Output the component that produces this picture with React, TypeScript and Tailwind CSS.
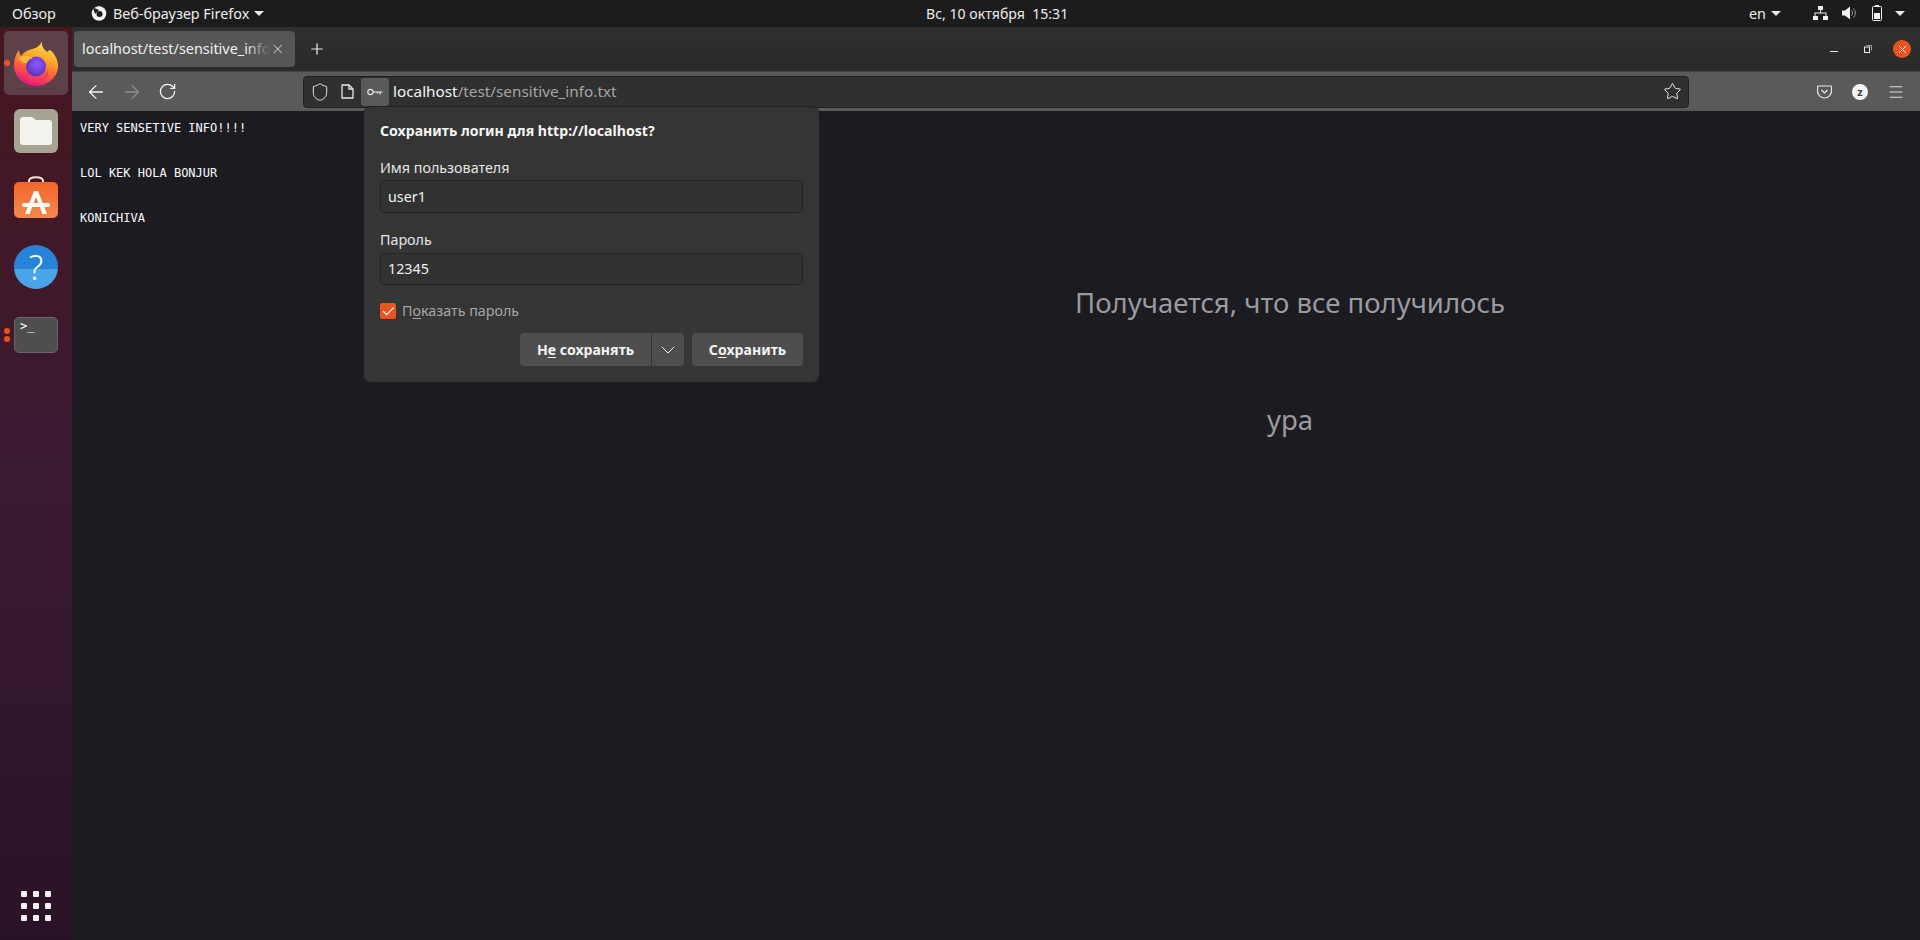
import React from "react";
import { ChevronDown, Shield, Star, Menu, ArrowLeft, ArrowRight, RotateCw, X, Plus, Check } from "lucide-react";

const ui = { fontFamily: '"Noto Sans", sans-serif' };

function FirefoxLogo() {
  return (
    <svg width="44" height="45" viewBox="0 0 44 45">
      <defs>
        <linearGradient id="ffBody" x1="0.75" y1="0" x2="0.4" y2="1">
          <stop offset="0" stopColor="#ffe14d" />
          <stop offset="0.4" stopColor="#ffa52a" />
          <stop offset="0.68" stopColor="#ff5a3c" />
          <stop offset="1" stopColor="#e31587" />
        </linearGradient>
        <radialGradient id="ffBall" cx="0.55" cy="0.4" r="0.6">
          <stop offset="0" stopColor="#9059ff" />
          <stop offset="1" stopColor="#5a32c0" />
        </radialGradient>
      </defs>
      <path d="M28 0C27 5 30 8 33 11c1-1 2-2 3-2 5 4 8 10 8 16 0 11-10 20-22 20C10 45 0 36 0 24c0-6 2-11 5-15 0 3 1 5 2 6 2-3 5-5 8-6 5-1 11-3 13-9z" fill="url(#ffBody)" />
      <circle cx="22" cy="25.500" r="10" fill="url(#ffBall)" />
      <path d="M5 17c4-3 10-3 14 0-3 1-5 2-6 5-3 1-7-1-8-5z" fill="#ffb83b" />
      <path d="M12 32c2 4 6 6 10 6 6 0 11-4 12-10 1 8-5 14-12 14-5 0-9-4-10-10z" fill="#f5366a" opacity="0.75" />
    </svg>
  );
}

function DockItem({ children, active, dots = 0 }: { children: React.ReactNode; active?: boolean; dots?: number }) {
  return (
    <div className={`relative flex h-[64px] w-[64px] items-center justify-center rounded-[5px] ${active ? "bg-[#5e4148]" : ""}`}>
      {children}
      {dots > 0 && (
        <div className="absolute left-0 top-1/2 flex -translate-y-1/2 flex-col gap-[2px]">
          {Array.from({ length: dots }).map((_, i) => (
            <span key={i} className="h-[6px] w-[6px] rounded-full bg-[#e95420]" />
          ))}
        </div>
      )}
    </div>
  );
}

function Dock() {
  return (
    <aside className="flex w-[72px] shrink-0 flex-col items-center bg-gradient-to-b from-[#46161f] via-[#3a1a33] to-[#2a1226] pt-[4px]">
      <div className="flex flex-col gap-[4px]">
        <DockItem active dots={1}>
          <FirefoxLogo />
        </DockItem>
        <DockItem>
          <div className="flex h-[44px] w-[44px] items-center justify-center rounded-[6px] bg-[#a8a493]">
            <svg width="32" height="28" viewBox="0 0 32 28">
              <path d="M3 0h9l4 3h13a3 3 0 0 1 3 3v19a3 3 0 0 1-3 3H3a3 3 0 0 1-3-3V3a3 3 0 0 1 3-3z" fill="#f5f3ef" />
            </svg>
          </div>
        </DockItem>
        <DockItem>
          <svg width="44" height="46" viewBox="0 0 44 46">
            <defs>
              <linearGradient id="bag" x1="0" y1="0" x2="0" y2="1">
                <stop offset="0" stopColor="#f4652a" />
                <stop offset="1" stopColor="#f28a50" />
              </linearGradient>
            </defs>
            <path d="M15 9V5c0-5 14-5 14 0v4" fill="none" stroke="#fbe6d4" strokeWidth="2" />
            <rect y="6" width="44" height="36" rx="5" fill="url(#bag)" />
            <path d="M20 15h4l9 23h-4.500L22 21l-6.500 17H11z" fill="#fff" />
            <rect x="8" y="27" width="28" height="4" rx="2" fill="#fff" />
          </svg>
        </DockItem>
        <DockItem>
          <div className="flex h-[44px] w-[44px] items-center justify-center rounded-full bg-[linear-gradient(#2783d8_55%,#49a5e8_55%)]">
            <span className="text-[34px] font-light leading-[44px] text-white" style={ui}>?</span>
          </div>
        </DockItem>
        <DockItem dots={2}>
          <div className="h-[36px] w-[44px] rounded-[5px] border border-[#666] bg-[#4e4e4e] pl-[5px] pt-[1px]">
            <span className="block text-[12px] leading-[14px] text-white" style={{ fontFamily: '"DejaVu Sans Mono", monospace' }}>&gt;_</span>
          </div>
        </DockItem>
      </div>
      <div className="mt-auto mb-[19px] grid grid-cols-3 gap-[6px]">
        {Array.from({ length: 9 }).map((_, i) => (
          <span key={i} className="h-[6px] w-[6px] rounded-[1px] bg-[#eeeeee]" />
        ))}
      </div>
    </aside>
  );
}

function Caret({ className = "" }: { className?: string }) {
  return <span className={`h-0 w-0 border-x-[5px] border-t-[5px] border-x-transparent border-t-[#e8e8e8] ${className}`} />;
}

function TopBar() {
  return (
    <header className="flex h-[27px] shrink-0 items-center bg-[#1c1c1c] text-[14.400px] text-[#ececec]" style={ui}>
      <div className="flex w-[926px] items-center">
        <span className="ml-[12px]">Обзор</span>
        <svg className="ml-[35px]" width="16" height="16" viewBox="0 0 16 16">
          <circle cx="8" cy="8.500" r="7.300" fill="#f2f2f2" />
          <circle cx="8.500" cy="9" r="3" fill="#1c1c1c" />
          <path d="M2 2.500l6 2.500-4 4z" fill="#1c1c1c" />
          <path d="M8 0.500l2 3.500-3 0z" fill="#f2f2f2" />
        </svg>
        <span className="ml-[6px]">Веб-браузер Firefox</span>
        <Caret className="ml-[5px]" />
      </div>
      <span className="text-[14.100px]">Вс, 10 октября&nbsp;&nbsp;15:31</span>
      <div className="ml-auto flex items-center">
        <span>en</span>
        <Caret className="ml-[5px]" />
        <svg className="ml-[32px]" width="15" height="14" viewBox="0 0 15 14" fill="#f0f0f0">
          <rect x="5" y="0" width="5" height="4" />
          <rect x="0" y="10" width="5" height="4" />
          <rect x="10" y="10" width="5" height="4" />
          <path d="M7 4h1v2.500h5.500V10h-1V7.500h-10V10h-1V6.500H7z" />
        </svg>
        <svg className="ml-[14px]" width="14" height="14" viewBox="0 0 14 14">
          <path d="M0 4.500h3L8 0.500v13l-5-4H0z" fill="#f0f0f0" />
          <path d="M9.500 4.500a3.500 3.500 0 0 1 0 5M11.500 2.500a6.500 6.500 0 0 1 0 9" stroke="#9a9a9a" strokeWidth="1" fill="none" />
        </svg>
        <svg className="ml-[16px]" width="10" height="16" viewBox="0 0 10 16">
          <rect x="3" y="0" width="4" height="2" fill="#f0f0f0" />
          <rect x="0.500" y="1.500" width="9" height="14" rx="1" fill="none" stroke="#f0f0f0" />
          <rect x="2" y="8" width="6" height="6" fill="#f0f0f0" />
        </svg>
        <Caret className="ml-[13px] mr-[15px]" />
      </div>
    </header>
  );
}

function TabBar() {
  return (
    <div className="flex h-[44px] shrink-0 items-center bg-gradient-to-b from-[#2f2f2f] to-[#2a2a2a] pl-[2px]" style={ui}>
      <div className="flex h-[36px] w-[221px] items-center rounded-[4px] bg-[#565656] pl-[8px] pr-[9px]">
        <span className="relative flex-1 whitespace-nowrap text-[14.400px] text-[#f0f0f0]">
          localhost/test/sensitive_info
          <span className="absolute inset-y-0 right-0 w-[24px] bg-gradient-to-r from-transparent to-[#565656]" />
        </span>
        <X size={16} strokeWidth={1.300} className="text-[#ececec]" />
      </div>
      <Plus size={18} strokeWidth={1.600} className="ml-[13px] text-[#f0f0f0]" />
      <div className="ml-auto flex items-center">
        <span className="mt-[4px] h-[1px] w-[8px] bg-[#e8e8e8]" />
        <svg className="ml-[26px]" width="8" height="8" viewBox="0 0 8 8" fill="none" stroke="#e8e8e8">
          <rect x="0.500" y="2" width="5" height="5.500" />
          <path d="M2.500 0.500h5v5" stroke="#a0a0a0" />
        </svg>
        <div className="ml-[21px] mr-[9px] flex h-[18px] w-[18px] items-center justify-center rounded-full bg-[#e95420]">
          <X size={13} strokeWidth={1.800} className="text-white" />
        </div>
      </div>
    </div>
  );
}

function UrlBar() {
  return (
    <div className="flex h-[40px] shrink-0 items-center border-t border-[#444] bg-[#5a5a5a]" style={ui}>
      <ArrowLeft size={22} strokeWidth={1.400} className="ml-[13px] text-[#f4f4f4]" />
      <ArrowRight size={22} strokeWidth={1.400} className="ml-[14px] text-[#8f8f8f]" />
      <RotateCw size={19} strokeWidth={1.600} className="ml-[15px] text-[#f4f4f4]" />
      <div className="ml-[126px] flex h-[32px] w-[1386px] items-center rounded-[4px] border border-[#1f1f1f] bg-[#303030] pl-[6px]">
        <Shield size={20} strokeWidth={1.200} className="text-[#e8e8e8]" />
        <svg className="ml-[11px]" width="13" height="15" viewBox="0 0 13 15" fill="none" stroke="#e8e8e8" strokeWidth="1.300">
          <path d="M1 1h7l4 4v9H1z" strokeLinejoin="round" />
          <path d="M8 1v4h4" />
        </svg>
        <div className="ml-[7px] flex h-[28px] w-[28px] items-center justify-center rounded-[3px] bg-[#5a5a5a]">
          <svg width="16" height="8" viewBox="0 0 16 8" fill="none" stroke="#ececec" strokeWidth="1.200">
            <circle cx="3.500" cy="4" r="2.700" />
            <path d="M6 4h9.500M13 4v2.500M10.500 4v1.500" />
          </svg>
        </div>
        <span className="ml-[4px] flex-1 whitespace-nowrap text-[15.300px]">
          <span className="text-[#f4f4f4]">localhost</span>
          <span className="text-[#a6a6a6]">/test/sensitive_info.txt</span>
        </span>
        <Star size={19} strokeWidth={1.250} className="mr-[6px] text-[#e8e8e8]" />
      </div>
      <div className="ml-auto flex items-center pr-[15px]">
        <svg width="15" height="14" viewBox="0 0 15 14" fill="none" stroke="#e8e8e8" strokeWidth="1.200">
          <path d="M1.500 1h12a1 1 0 0 1 1 1v4a7 7 0 0 1-14 0V2a1 1 0 0 1 1-1z" />
          <path d="M4.500 5l3 3 3-3" />
        </svg>
        <div className="ml-[20px] flex h-[16px] w-[16px] items-center justify-center rounded-full bg-[#f4f4f4] text-[11px] font-bold leading-none text-[#444]">z</div>
        <Menu size={18} strokeWidth={1.200} className="ml-[19px] text-[#f0f0f0]" />
      </div>
    </div>
  );
}

function LoginPopup() {
  return (
    <div className="absolute left-[291px] top-[79px] z-10 h-[277px] w-[457px] rounded-[8px] border border-[#1f1f1f] bg-[#353535] px-[16px] pt-[14px] text-[14.300px] text-[#e6e6e6]" style={ui}>
      <div className="text-[14.100px] font-bold leading-[19px] text-[#f6f6f6]">Сохранить логин для http://localhost?</div>
      <div className="mt-[18px] leading-[19px]">Имя пользователя</div>
      <div className="mt-[3px] flex h-[33px] items-center rounded-[4px] border border-[#232323] bg-[#323232] px-[7px] text-[#f0f0f0]">user1</div>
      <div className="mt-[17px] leading-[19px]">Пароль</div>
      <div className="mt-[4px] flex h-[32px] items-center rounded-[4px] border border-[#232323] bg-[#323232] px-[7px] text-[#f0f0f0]">12345</div>
      <div className="mt-[18px] flex h-[16px] items-center">
        <div className="flex h-[16px] w-[16px] items-center justify-center rounded-[2px] bg-[#e95420]">
          <Check size={15} strokeWidth={1.800} className="text-white" />
        </div>
        <span className="ml-[6px] text-[#a6a6a6]">
          П<span className="underline underline-offset-2">о</span>казать пароль
        </span>
      </div>
      <div className="mt-[14px] flex justify-end text-[14.100px] font-bold text-[#f4f4f4]">
        <button className="h-[33px] w-[132px] rounded-l-[4px] border-r border-[#353535] bg-[#4e4e4e]">
          Н<span className="underline underline-offset-2">е</span> сохранять
        </button>
        <button className="flex h-[33px] w-[32px] items-center justify-center rounded-r-[4px] bg-[#4e4e4e]">
          <ChevronDown size={24} strokeWidth={1} />
        </button>
        <button className="ml-[8px] h-[33px] w-[111px] rounded-[4px] bg-[#4e4e4e]">
          С<span className="underline underline-offset-2">о</span>хранить
        </button>
      </div>
    </div>
  );
}

function Page() {
  return (
    <main className="flex flex-1 bg-[#1c1b22]">
      <pre className="w-[588px] shrink-0 pl-[8px] pt-[10px] text-[12px] leading-[15px] text-[#fbfbfe]" style={{ fontFamily: '"DejaVu Sans Mono", monospace' }}>
        {"VERY SENSETIVE INFO!!!!\n\n\nLOL KEK HOLA BONJUR\n\n\nKONICHIVA"}
      </pre>
      <div className="flex flex-1 flex-col items-center pt-[173px] text-[27.500px] leading-[38px] text-[#9a9a9f]" style={ui}>
        <p>Получается, что все получилось</p>
        <p className="mt-[79px]">ура</p>
      </div>
    </main>
  );
}

export default function App() {
  return (
    <div className="flex h-[940px] w-[1920px] flex-col overflow-hidden">
      <TopBar />
      <div className="flex flex-1">
        <Dock />
        <div className="relative flex flex-1 flex-col">
          <TabBar />
          <UrlBar />
          <Page />
          <LoginPopup />
        </div>
      </div>
    </div>
  );
}
